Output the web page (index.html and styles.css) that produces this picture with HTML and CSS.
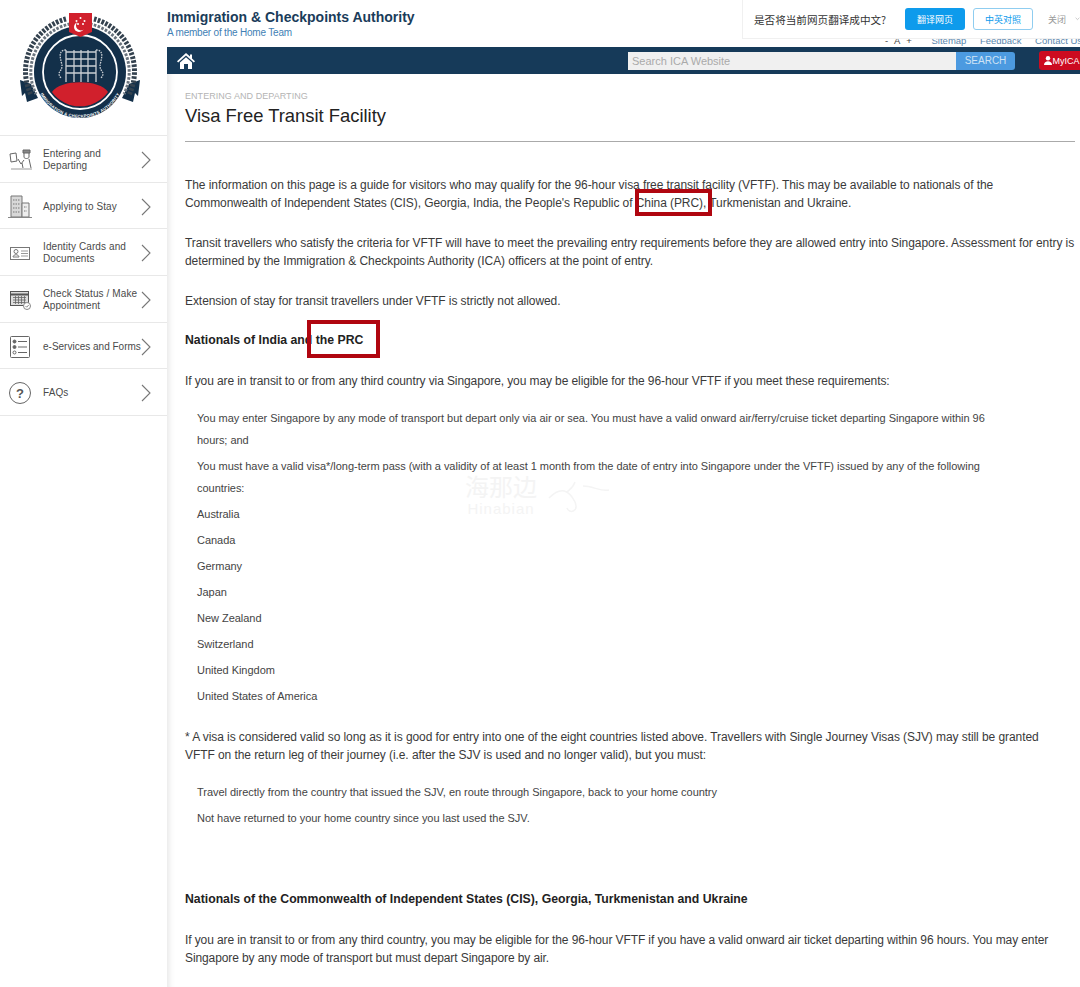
FILE: index.html
```html
<!DOCTYPE html>
<html lang="en">
<head>
  <meta charset="UTF-8">
  <meta name="viewport" content="width=device-width, initial-scale=1.0">
  <title>Visa Free Transit Facility</title>
  <link rel="stylesheet" href="styles.css">
</head>
<body>
  <div class="page">

    <!-- left column -->
    <aside class="sidebar">
      <div class="logo">
        <svg width="167" height="135" viewBox="0 0 167 135">
          <!-- ribbons -->
          <path d="M20 80 L31 84 L38 98 L27 102 L25 93 L22 96 Z" fill="#13304a"/>
          <path d="M140 80 L129 84 L122 98 L133 102 L135 93 L138 96 Z" fill="#13304a"/>
          <!-- wreath, one arc each side of the shield -->
          <g fill="none" stroke-dasharray="2.6 1.4">
            <path d="M66 19 A54 54 0 0 0 31 95" stroke="#34424f" stroke-width="5"/>
            <path d="M94 19 A54 54 0 0 1 129 95" stroke="#34424f" stroke-width="5"/>
            <path d="M70 24 A49 49 0 0 0 36 94" stroke="#6a747e" stroke-width="3"/>
            <path d="M90 24 A49 49 0 0 1 124 94" stroke="#6a747e" stroke-width="3"/>
          </g>
          <circle cx="80" cy="72" r="46" fill="#13304a"/>
          <circle cx="80" cy="72" r="37" fill="none" stroke="#fff" stroke-width="1.800"/>
          <circle cx="80" cy="72" r="34.500" fill="#13304a"/>
          <!-- red hill -->
          <path d="M52 92 C60 79 100 79 108 92 A34.500 34.500 0 0 1 52 92 Z" fill="#d1202c"/>
          <!-- gate -->
          <g stroke="#c9ced3" stroke-width="1.300" fill="none">
            <path d="M66 52 H96 M66 59 H96 M66 66 H96 M66 73 H96"/>
            <path d="M66 50 V82 M74 50 V82 M81 50 V82 M88 50 V82 M96 50 V82"/>
            <path d="M66 50 C56 50 62 62 62 66 C62 72 56 72 61 78" stroke-dasharray="1.600 1"/>
            <path d="M96 50 C106 50 100 62 100 66 C100 72 106 72 101 78" stroke-dasharray="1.600 1"/>
          </g>
          <!-- ring text -->
          <path id="ringText" d="M37 86 A45 45 0 0 0 123 86" fill="none"/>
          <text class="logo-text"><textPath href="#ringText" startOffset="50%" text-anchor="middle">IMMIGRATION &amp; CHECKPOINTS AUTHORITY</textPath></text>
          <!-- flag shield -->
          <path d="M69 13 H92 V32 L80.500 37 L69 32 Z" fill="#d1202c"/>
          <circle cx="79" cy="27" r="5" fill="#fff"/>
          <circle cx="81" cy="25.500" r="5" fill="#d1202c"/>
          <g fill="#fff">
            <circle cx="80.500" cy="18" r="1"/>
            <circle cx="76.500" cy="21" r="1"/>
            <circle cx="84.500" cy="21" r="1"/>
            <circle cx="78" cy="24" r="1"/>
            <circle cx="83" cy="24" r="1"/>
          </g>
        </svg>
      </div>

      <nav class="side-nav">
        <a class="side-item" href="#">
          <svg class="side-icon" width="24" height="24" viewBox="0 0 24 24" fill="none" stroke="#666" stroke-width="1">
            <path d="M2 6 L8 5 L9 13 L3 14 Z"/>
            <path d="M15 2 H22 V5 H15 Z" fill="#888"/>
            <path d="M16 5 V9 C16 11 21 11 21 9 V5"/>
            <path d="M10 11 L13 16 L16 12 M14 15 L15 20 M21 11 L23 20"/>
            <path d="M3 21 H24" stroke="#999"/>
          </svg>
          <span class="side-label">Entering and Departing</span>
          <svg class="chevron" width="10" height="18" viewBox="0 0 10 18"><path d="M1 1 L9 9 L1 17" fill="none" stroke="#777" stroke-width="1.100"/></svg>
        </a>
        <a class="side-item" href="#">
          <svg class="side-icon" width="24" height="24" viewBox="0 0 24 24" fill="none" stroke="#777" stroke-width="1">
            <path d="M3 1 H14 V22 H3 Z" fill="#d8d8d8"/>
            <path d="M14 8 H21 V22 H14 Z" fill="#eee"/>
            <path d="M5 5 H12 M5 9 H12 M5 13 H12 M5 17 H12 M16 12 H19 M16 16 H19" stroke-dasharray="1.500 1"/>
            <path d="M0 22.500 H24" stroke="#888"/>
          </svg>
          <span class="side-label">Applying to Stay</span>
          <svg class="chevron" width="10" height="18" viewBox="0 0 10 18"><path d="M1 1 L9 9 L1 17" fill="none" stroke="#777" stroke-width="1.100"/></svg>
        </a>
        <a class="side-item" href="#">
          <svg class="side-icon" width="24" height="24" viewBox="0 0 24 24" fill="none" stroke="#777" stroke-width="1">
            <rect x="2.500" y="6.500" width="19" height="12"/>
            <circle cx="8" cy="10.500" r="2"/>
            <path d="M5 16 C5 13 11 13 11 16 Z"/>
            <path d="M13 10 H20 M13 12.500 H20 M13 15 H20" stroke="#999" stroke-width="1.200"/>
          </svg>
          <span class="side-label">Identity Cards and Documents</span>
          <svg class="chevron" width="10" height="18" viewBox="0 0 10 18"><path d="M1 1 L9 9 L1 17" fill="none" stroke="#777" stroke-width="1.100"/></svg>
        </a>
        <a class="side-item" href="#">
          <svg class="side-icon" width="24" height="24" viewBox="0 0 24 24" fill="none" stroke="#555" stroke-width="1">
            <rect x="2.500" y="3.500" width="18" height="14" fill="#ddd"/>
            <path d="M2.500 6.500 H20.500" stroke-width="2"/>
            <path d="M5 9.500 H18 M5 12 H18 M5 14.500 H18 M7.500 8 V16 M10.500 8 V16 M13.500 8 V16 M16.500 8 V16" stroke="#666" stroke-width=".8"/>
            <circle cx="19" cy="18" r="3.500" fill="#fff" stroke="#888"/>
            <path d="M17.500 18 L18.700 19.200 L20.700 17" stroke="#888"/>
          </svg>
          <span class="side-label">Check Status / Make Appointment</span>
          <svg class="chevron" width="10" height="18" viewBox="0 0 10 18"><path d="M1 1 L9 9 L1 17" fill="none" stroke="#777" stroke-width="1.100"/></svg>
        </a>
        <a class="side-item" href="#">
          <svg class="side-icon" width="24" height="24" viewBox="0 0 24 24" fill="none" stroke="#666" stroke-width="1">
            <rect x="2.500" y="1.500" width="19" height="21" rx="1"/>
            <circle cx="6.500" cy="6.500" r="1.500" fill="#666"/>
            <circle cx="6.500" cy="12" r="1.500" fill="#666"/>
            <circle cx="6.500" cy="17.500" r="1.500"/>
            <path d="M10 6.500 H19 M10 12 H19 M10 17.500 H19"/>
          </svg>
          <span class="side-label one-line">e-Services and Forms</span>
          <svg class="chevron" width="10" height="18" viewBox="0 0 10 18"><path d="M1 1 L9 9 L1 17" fill="none" stroke="#777" stroke-width="1.100"/></svg>
        </a>
        <a class="side-item" href="#">
          <svg class="side-icon" width="24" height="24" viewBox="0 0 24 24" fill="none" stroke="#666" stroke-width="1">
            <circle cx="12" cy="12" r="10.500"/>
            <text class="faq-mark" x="12" y="16.500" text-anchor="middle">?</text>
          </svg>
          <span class="side-label">FAQs</span>
          <svg class="chevron" width="10" height="18" viewBox="0 0 10 18"><path d="M1 1 L9 9 L1 17" fill="none" stroke="#777" stroke-width="1.100"/></svg>
        </a>
      </nav>
    </aside>

    <!-- right column -->
    <div class="main">
      <header class="brand">
        <div class="brand-name">Immigration &amp; Checkpoints Authority</div>
        <div class="brand-sub">A member of the Home Team</div>
      </header>

      <div class="util-links">
        <span class="font-size">- &nbsp;A&nbsp; +</span>
        <a href="#">Sitemap</a>
        <a href="#">Feedback</a>
        <a href="#">Contact Us</a>
      </div>

      <div class="topbar">
        <svg class="home-icon" width="18" height="18" viewBox="0 0 18 18">
          <path d="M9 1 L13 4.600 V2.500 H15 V6.400 L18 9.200 L16.800 10.400 L9 3.600 L1.200 10.400 L0 9.200 Z M3 10.500 L9 5.300 L15 10.500 V17 H11 V12 H7 V17 H3 Z" fill="#fff"/>
        </svg>
        <div class="search">
          <input class="search-input" type="text" placeholder="Search ICA Website">
          <button class="search-btn" type="button">SEARCH</button>
        </div>
        <a class="myica" href="#">
          <svg width="8" height="9" viewBox="0 0 8 9"><circle cx="4" cy="2.200" r="2.200" fill="#fff"/><path d="M0 9 C0 4 8 4 8 9 Z" fill="#fff"/></svg>MyICA
        </a>
      </div>

      <main class="content">
        <div class="crumb">ENTERING AND DEPARTING</div>
        <h1 class="page-title">Visa Free Transit Facility</h1>
        <hr class="rule">

        <p class="para first">The information on this page is a guide for visitors who may qualify for the 96-hour visa free transit facility (VFTF). This may be available to nationals of the Commonwealth of Independent States (CIS), Georgia, India, the People's Republic of China (PRC), Turkmenistan and Ukraine.</p>
        <p class="para wide">Transit travellers who satisfy the criteria for VFTF will have to meet the prevailing entry requirements before they are allowed entry into Singapore. Assessment for entry is determined by the Immigration &amp; Checkpoints Authority (ICA) officers at the point of entry.</p>
        <p class="para">Extension of stay for transit travellers under VFTF is strictly not allowed.</p>

        <h2 class="sub-head">Nationals of India and the PRC</h2>
        <p class="para after-head tight">If you are in transit to or from any third country via Singapore, you may be eligible for the 96-hour VFTF if you meet these requirements:</p>

        <ul class="req-list">
          <li>You may enter Singapore by any mode of transport but depart only via air or sea. You must have a valid onward air/ferry/cruise ticket departing Singapore within 96 hours; and</li>
          <li>You must have a valid visa*/long-term pass (with a validity of at least 1 month from the date of entry into Singapore under the VFTF) issued by any of the following countries:</li>
          <li>Australia</li>
          <li>Canada</li>
          <li>Germany</li>
          <li>Japan</li>
          <li>New Zealand</li>
          <li>Switzerland</li>
          <li>United Kingdom</li>
          <li>United States of America</li>
        </ul>

        <p class="para after-list">* A visa is considered valid so long as it is good for entry into one of the eight countries listed above. Travellers with Single Journey Visas (SJV) may still be granted VFTF on the return leg of their journey (i.e. after the SJV is used and no longer valid), but you must:</p>

        <ul class="req-list second">
          <li>Travel directly from the country that issued the SJV, en route through Singapore, back to your home country</li>
          <li>Not have returned to your home country since you last used the SJV.</li>
        </ul>

        <h2 class="sub-head lower">Nationals of the Commonwealth of Independent States (CIS), Georgia, Turkmenistan and Ukraine</h2>
        <p class="para after-lower tight">If you are in transit to or from any third country, you may be eligible for the 96-hour VFTF if you have a valid onward air ticket departing within 96 hours. You may enter Singapore by any mode of transport but must depart Singapore by air.</p>
      </main>
    </div>
  </div>

  <!-- browser translate prompt -->
  <div class="translate-bar">
    <span class="translate-q">是否将当前网页翻译成中文?</span>
    <button class="btn-translate" type="button">翻译网页</button>
    <button class="btn-compare" type="button">中英对照</button>
    <span class="translate-close">关闭</span>
    <svg width="8" height="6" viewBox="0 0 8 6"><path d="M1 1 L4 4 L7 1" fill="none" stroke="#aaa"/></svg>
  </div>

  <!-- annotation boxes drawn over the article -->
  <div class="mark mark-china"></div>
  <div class="mark mark-prc"></div>

  <div class="watermark">
    <div class="wm-text"><div class="wm-cn">海那边</div><div class="wm-en">Hinabian</div></div>
    <svg width="64" height="44" viewBox="0 0 64 44" fill="none" stroke="#f4f4f4" stroke-width="1.500"><path d="M2 26 C14 14 22 18 28 30 C32 40 22 42 20 36 M28 10 C26 16 22 18 20 20 M36 14 C46 14 54 20 62 18"/></svg>
  </div>
</body>
</html>
```

FILE: styles.css
```css
* {
  box-sizing: border-box;
}

html, body {
  height: 987px;
  margin: 0;
  padding: 0;
  overflow: hidden;
}

body {
  font-family: "Liberation Sans", Arial, sans-serif;
  color: #333;
  background-color: #fff;
  position: relative;
}

a {
  color: inherit;
  text-decoration: none;
}

.page {
  display: flex;
  width: 1080px;
  height: 987px;
}

/* sidebar */
.sidebar {
  width: 167px;
  flex-shrink: 0;
}

.logo {
  height: 135px;
}

.logo svg {
  display: block;
}

.logo-text {
  font-family: "Liberation Sans", sans-serif;
  font-size: 4.200px;
  font-weight: bold;
  letter-spacing: 0.2px;
  fill: #fff;
}

.side-nav {
  border-top: 1px solid #e8e8e8;
}

.side-item {
  display: flex;
  align-items: center;
  height: 46.700px;
  padding-left: 8px;
  padding-top: 2px;
  border-bottom: 1px solid #e8e8e8;
  font-size: 10px;
  letter-spacing: 0.1px;
  line-height: 12px;
  color: #4a4a4a;
}

.side-icon {
  flex-shrink: 0;
}

.side-label {
  width: 98px;
  margin-left: 11px;
  flex-shrink: 0;
}

.side-label.one-line {
  letter-spacing: 0;
  white-space: nowrap;
}

.chevron {
  flex-shrink: 0;
}

.faq-mark {
  font-family: "Liberation Sans", sans-serif;
  font-size: 13px;
  font-weight: bold;
  fill: #555;
  stroke: none;
}

/* header */
.main {
  flex: 1;
  min-width: 0;
}

.brand {
  height: 47px;
  padding-top: 10px;
}

.brand-name {
  font-size: 14px;
  font-weight: bold;
  line-height: 15px;
  color: #1a3c5a;
}

.brand-sub {
  margin-top: 2px;
  font-size: 10px;
  letter-spacing: -0.2px;
  line-height: 12px;
  color: #3f7fb5;
}

.util-links {
  position: absolute;
  top: 35px;
  left: 885px;
  display: flex;
  gap: 13.500px;
  font-size: 9.500px;
  line-height: 11px;
  color: #5a86ad;
  white-space: nowrap;
}

.font-size {
  color: #444;
  margin-right: 6px;
  letter-spacing: 0.2px;
}

.topbar {
  display: flex;
  align-items: center;
  height: 27px;
  padding-left: 10px;
  background-color: #163a59;
}

.home-icon {
  flex-shrink: 0;
}

.search {
  display: flex;
  margin-left: 433px;
}

.search-input {
  width: 328px;
  height: 18px;
  padding: 0 4px;
  border: none;
  border-radius: 0;
  background-color: #f0f0f0;
  font-family: inherit;
  font-size: 11px;
}

.search-input::placeholder {
  color: #aaa;
  opacity: 1;
}

.search-btn {
  width: 59px;
  height: 18px;
  padding: 0;
  border: none;
  border-radius: 0 3px 3px 0;
  background-color: #4c9ae0;
  color: #cfe3f5;
  font-family: inherit;
  font-size: 10px;
}

.myica {
  display: flex;
  align-items: center;
  justify-content: center;
  gap: 1px;
  width: 45px;
  height: 19px;
  margin-left: 24px;
  border-radius: 3px 0 0 3px;
  background-color: #cc0b20;
  color: #fff;
  font-size: 9px;
  flex-shrink: 0;
}

/* article */
.content {
  height: 913px;
  padding: 17px 5px 0 18px;
  box-shadow: inset 7px 0 6px -5px #e6e6e6;
}

.crumb {
  font-size: 9px;
  letter-spacing: 0.05px;
  line-height: 11px;
  color: #b4b4b4;
}

.page-title {
  margin: 2px 0 0;
  font-size: 18.400px;
  font-weight: normal;
  line-height: 24px;
  color: #222;
}

.rule {
  height: 1px;
  margin: 13px 0 0;
  border: none;
  background-color: #aaa;
}

.para {
  margin: 22px 0 0;
  font-size: 12px;
  letter-spacing: -0.07px;
  line-height: 18px;
  color: #3a3a3a;
}

.para.first {
  margin-top: 34px;
}

.para.wide {
  margin-right: -3px;
}

.para.tight {
  letter-spacing: -0.1px;
}

.para.after-head {
  margin-top: 23px;
}

.para.after-lower {
  margin-top: 23px;
}

.para.after-list {
  margin-top: 21px;
  margin-right: 8px;
}

.sub-head {
  margin: 21px 0 0;
  font-size: 12.250px;
  font-weight: bold;
  line-height: 18px;
  color: #222;
}

.sub-head.lower {
  margin-top: 61px;
}

.req-list {
  list-style: none;
  margin: 17px 0 0;
  padding: 0 85px 0 12px;
  font-size: 11px;
  letter-spacing: -0.03px;
  line-height: 22px;
  color: #444;
}

.req-list li {
  margin-bottom: 4px;
}

.req-list.second {
  margin-top: 17px;
}

/* translate prompt */
.translate-bar {
  position: absolute;
  top: 0;
  left: 742px;
  width: 338px;
  height: 39px;
  display: flex;
  align-items: center;
  padding-left: 11px;
  background-color: #fff;
  border-left: 1px solid #f0f0f0;
  border-bottom: 1px solid #f0f0f0;
  font-family: "Noto Sans CJK SC", "Liberation Sans", sans-serif;
}

.translate-q {
  font-size: 10.600px;
  color: #333;
  white-space: nowrap;
  width: 151px;
  flex-shrink: 0;
}

.btn-translate,
.btn-compare {
  width: 60px;
  height: 22px;
  padding: 0;
  border-radius: 3px;
  font-family: inherit;
  font-size: 9px;
  flex-shrink: 0;
}

.btn-translate {
  border: none;
  background-color: #0e9bec;
  color: #fff;
}

.btn-compare {
  margin-left: 8px;
  border: 1px solid #8fcdf0;
  background-color: #fff;
  color: #0e9bec;
}

.translate-close {
  margin: 0 9px 0 15px;
  font-size: 9px;
  color: #999;
  white-space: nowrap;
}

/* red annotation boxes */
.mark {
  position: absolute;
  border: 4px solid #b00610;
}

.mark-china {
  left: 635px;
  top: 189px;
  width: 77px;
  height: 27px;
}

.mark-prc {
  left: 307px;
  top: 320px;
  width: 73px;
  height: 38px;
}

/* faint watermark */
.watermark {
  position: absolute;
  left: 465px;
  top: 472px;
  display: flex;
  gap: 10px;
}

.wm-text {
  color: #f4f4f4;
  text-align: center;
}

.wm-cn {
  font-family: "Noto Sans CJK SC", sans-serif;
  font-size: 24px;
  line-height: 28px;
}

.wm-en {
  font-size: 15px;
  line-height: 17px;
  letter-spacing: 1px;
}
```
